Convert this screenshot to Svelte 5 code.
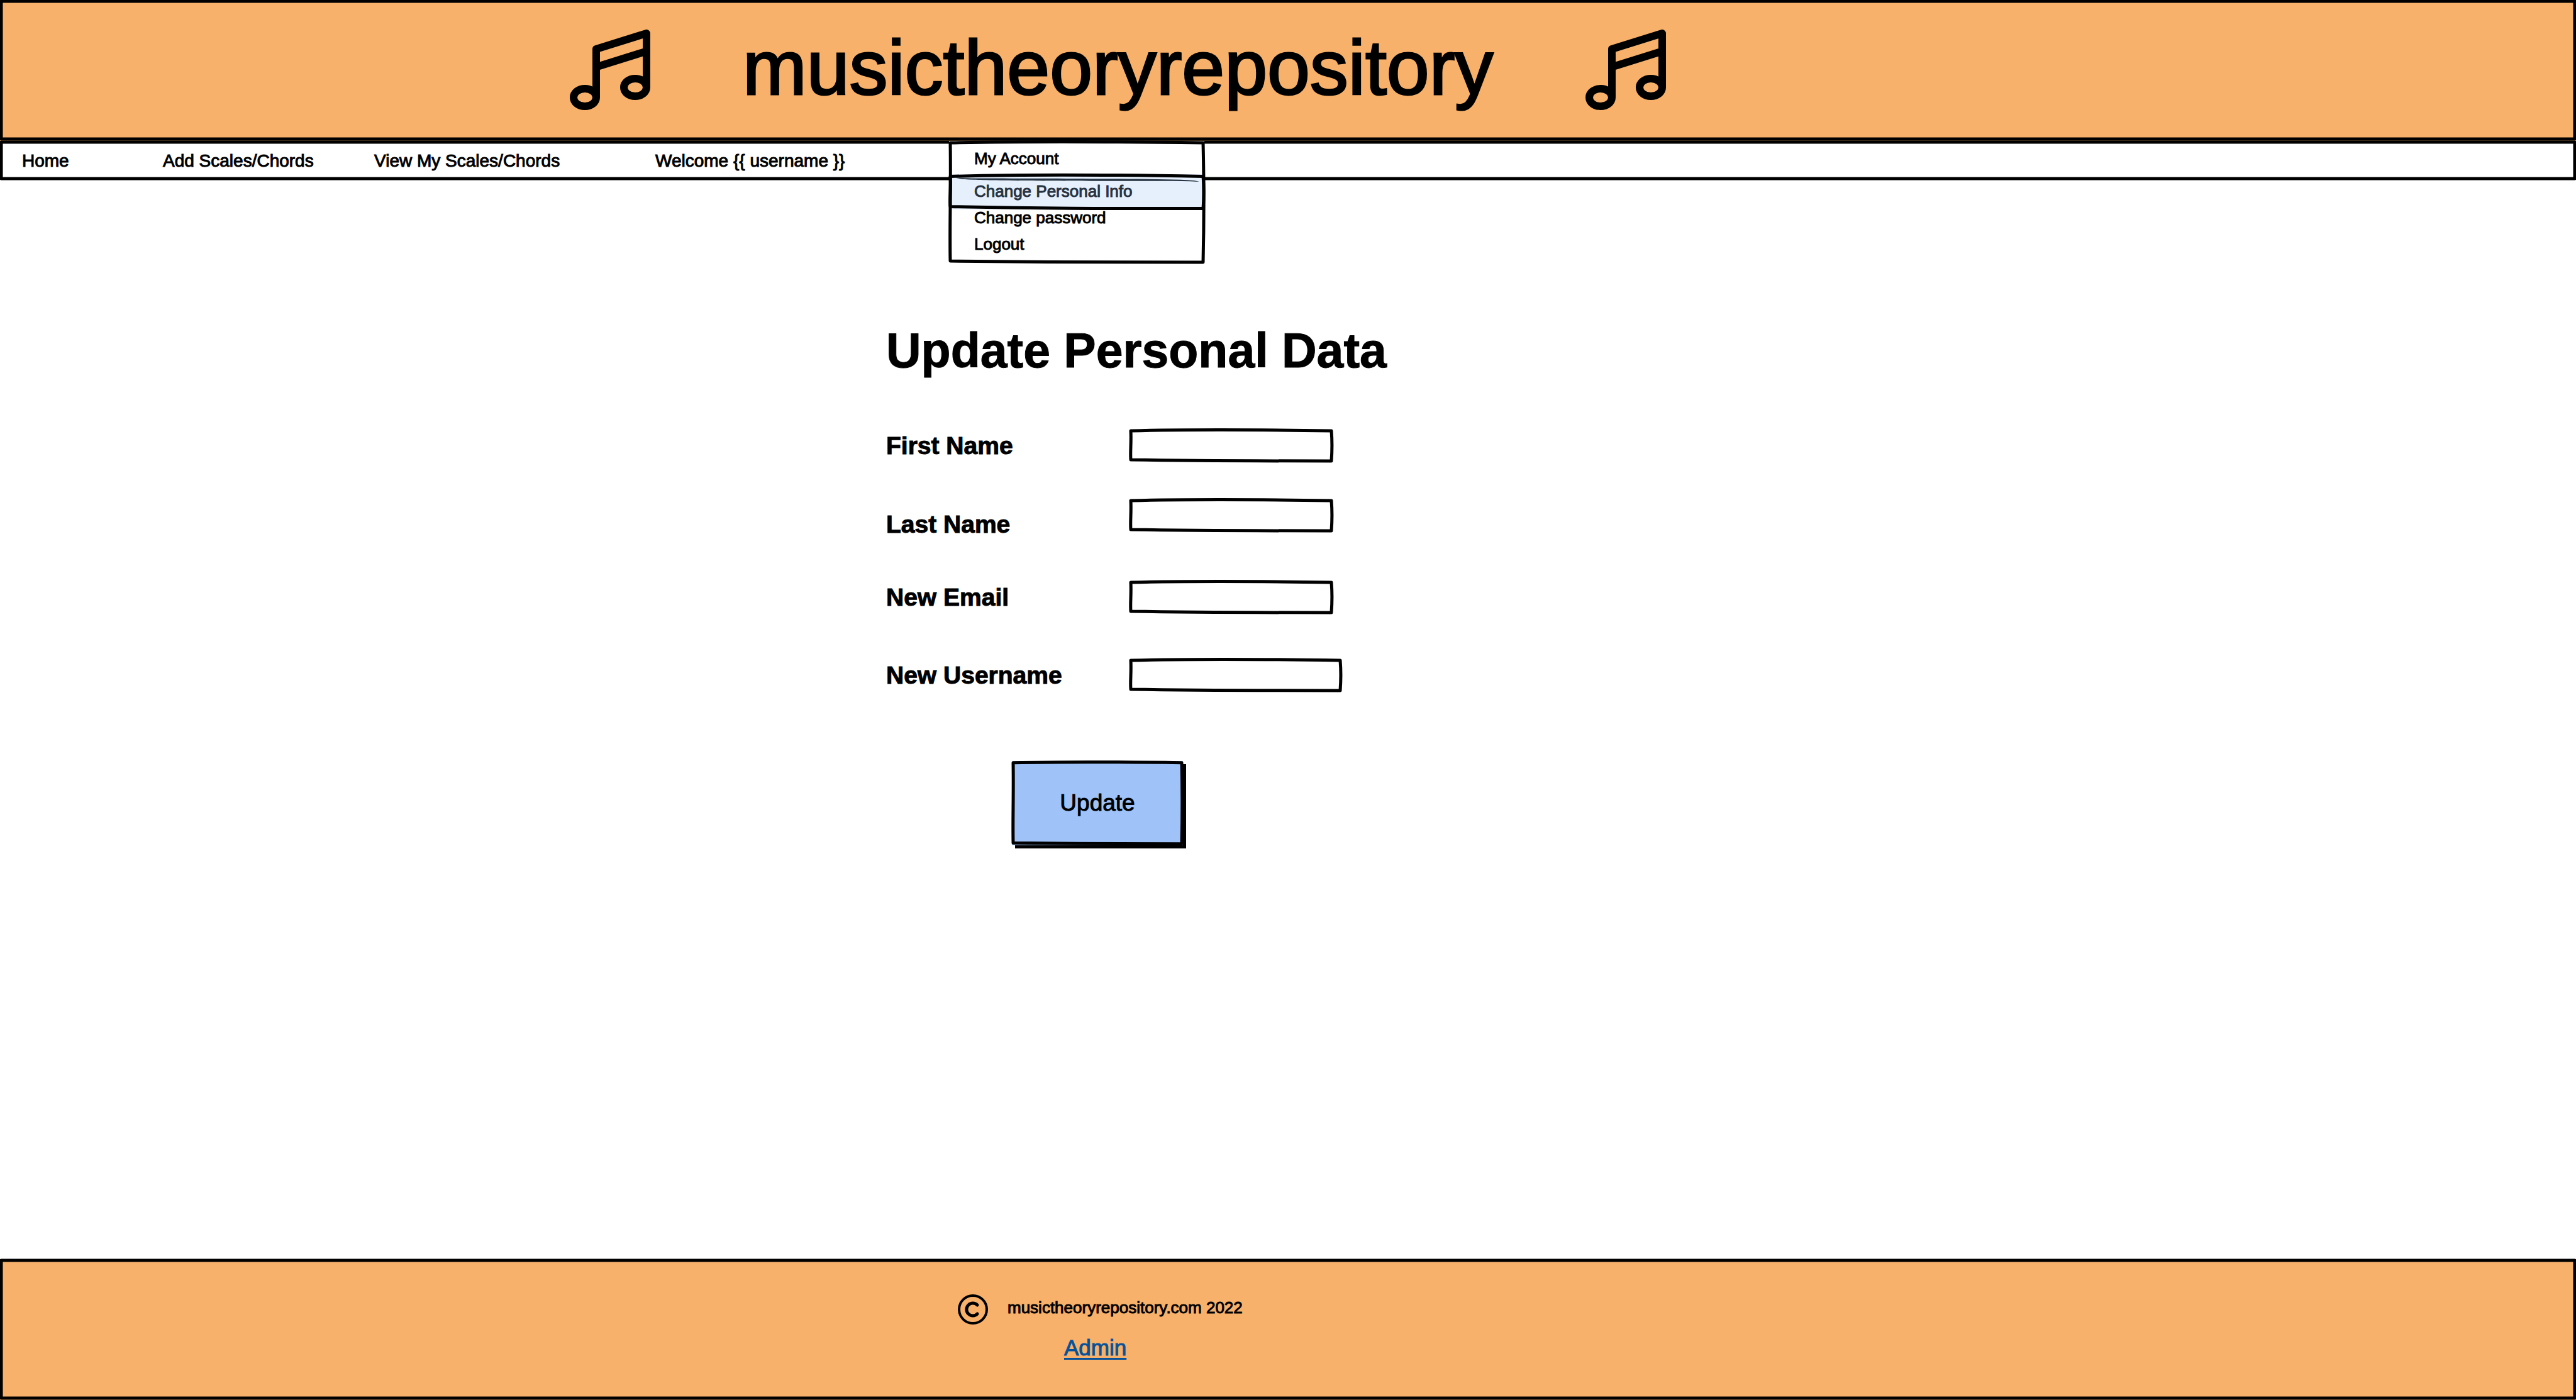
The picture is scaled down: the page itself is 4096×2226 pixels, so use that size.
<script>
  const links = ['Home', 'Add Scales/Chords', 'View My Scales/Chords'];
  const fields = [
    { id: 'first-name', label: 'First Name', type: 'text' },
    { id: 'last-name', label: 'Last Name', type: 'text' },
    { id: 'new-email', label: 'New Email', type: 'email' },
    { id: 'new-username', label: 'New Username', type: 'text' }
  ];

  // Hand-drawn rectangle; k is the wobble as a percentage of the box height.
  const sketch = (k) =>
    `M0 ${k} C25 ${-k} 60 ${-k} 100 ${k} C100.4 35 100.4 65 100 ${100 + k} ` +
    `C60 ${100 + k} 35 ${100 + k} 0 ${100 - k} C-0.3 70 0.3 40 0 ${k} Z`;
</script>

{#snippet frame(k)}
  <svg class="frame" viewBox="0 0 100 100" preserveAspectRatio="none" aria-hidden="true">
    <path d={sketch(k)} />
  </svg>
{/snippet}

{#snippet edge()}
  <svg class="frame" viewBox="0 0 100 100" preserveAspectRatio="none" aria-hidden="true">
    <path d="M0 0 H100 V100 H0 Z" />
  </svg>
{/snippet}

{#snippet notes()}
  <svg class="notes" viewBox="0 0 128 128" aria-hidden="true">
    <ellipse cx="24" cy="108" rx="18" ry="14" />
    <ellipse cx="104" cy="92" rx="18" ry="14" />
    <path d="M42 108 V31 L122 6 V92 M42 59.5 L122 34.5" />
  </svg>
{/snippet}

<div class="page">
  <header class="banner">
    {@render edge()}
    {@render notes()}
    <div class="brand">musictheoryrepository</div>
    {@render notes()}
  </header>

  <nav class="nav">
    {@render edge()}
    {#each links as link}
      <a href="#top">{link}</a>
    {/each}
    <span>Welcome {'{{ username }}'}</span>
    <div class="account">
      <div class="menu">
        <button type="button" class="toggle" aria-expanded="true">My Account</button>
        <a class="item selected" href="#info">
          {@render frame(3)}
          <svg class="streak" viewBox="0 0 100 10" preserveAspectRatio="none" aria-hidden="true">
            <path d="M0 0 C2 3 5 3 12 3 C50 3.5 80 4 95 6.500 Q99 7.500 100 10 L96 9 C70 8 20 9 8 6 Q1 5 0 0 Z" />
          </svg>
          Change Personal Info
        </a>
        <div class="rest">
          <a class="item" href="#password">Change password</a>
          <a class="item" href="#logout">Logout</a>
        </div>
        {@render frame(0.5)}
      </div>
    </div>
  </nav>

  <main>
    <h1>Update Personal Data</h1>
    <form onsubmit={(e) => e.preventDefault()}>
      {#each fields as field}
        <div class="row {field.id}">
          <label for={field.id}>{field.label}</label>
          <span class="box">
            <input id={field.id} type={field.type} />
            {@render frame(2)}
          </span>
        </div>
      {/each}
      <button class="submit" type="submit">
        {@render frame(0.5)}
        Update
      </button>
    </form>
  </main>

  <footer class="footer">
    {@render edge()}
    <div class="legal">
      <svg class="copyright" viewBox="0 0 48 48" role="img" aria-label="Copyright">
        <circle cx="24" cy="24" r="22" />
        <path d="M31 17 A10 10 0 1 0 31 31" />
      </svg>
      <span>musictheoryrepository.com 2022</span>
    </div>
    <a class="admin" href="#admin">Admin</a>
  </footer>
</div>

<style>
  :global(body) {
    margin: 0;
    background: #fff;
  }

  .page {
    display: flex;
    flex-direction: column;
    min-height: 100vh;
    color: #000;
    font-family: 'Liberation Sans', Arial, sans-serif;
    font-size: 28px;
    -webkit-text-stroke-width: 1px;
  }

  a {
    color: inherit;
    text-decoration: none;
  }

  button,
  input {
    margin: 0;
    padding: 0;
    border: 0;
    background: none;
    color: inherit;
    font: inherit;
  }

  svg {
    display: block;
    flex: none;
    fill: none;
    stroke: #000;
  }

  .frame {
    position: absolute;
    top: 2px;
    left: 2px;
    width: calc(100% - 4px);
    height: calc(100% - 5px);
    overflow: visible;
    stroke-width: 5px;
    stroke-linejoin: round;
    pointer-events: none;
  }

  .frame path {
    vector-effect: non-scaling-stroke;
  }

  .banner,
  .footer {
    position: relative;
    box-sizing: border-box;
    min-height: 224px;
    background: #f7b16b;
  }

  .banner {
    display: flex;
    align-items: flex-start;
    gap: 147px;
    padding: 47px 0 0 906px;
  }

  .notes {
    width: 128px;
    height: 128px;
    stroke-width: 12px;
    stroke-linejoin: round;
  }

  .brand {
    font-size: 122px;
    line-height: 122px;
    -webkit-text-stroke-width: 3px;
  }

  .nav {
    position: relative;
    box-sizing: border-box;
    display: grid;
    grid-template-columns: 224px 336px 447px 467px 406px;
    align-items: center;
    min-height: 63px;
    padding-left: 35px;
    white-space: nowrap;
  }

  .account {
    position: relative;
    align-self: stretch;
  }

  .menu {
    position: absolute;
    top: 0;
    left: 0;
    box-sizing: border-box;
    display: flex;
    flex-direction: column;
    width: 100%;
    padding: 5px 0 18px;
    background: #fff;
    font-size: 26px;
    line-height: 26px;
  }

  .toggle {
    padding: 10px 40px 12px;
    text-align: left;
  }

  .item {
    padding-left: 40px;
  }

  .selected {
    position: relative;
    padding: 14px 40px 16px;
    background: #e6f0fd;
    color: #283341;
  }

  .streak {
    position: absolute;
    top: 4px;
    left: 8px;
    width: calc(100% - 16px);
    height: 8px;
    fill: #283341;
    stroke: none;
  }

  .rest {
    display: flex;
    flex-direction: column;
    gap: 16px;
  }

  main {
    flex: 1;
    padding: 226px 0 80px 1409px;
  }

  h1 {
    margin: 0 0 81px;
    font-size: 77px;
    line-height: 88px;
  }

  .row {
    display: flex;
    align-items: flex-start;
    margin-bottom: 58px;
  }

  .last-name {
    height: 67px;
    margin-bottom: 63px;
  }

  .last-name label {
    align-self: flex-end;
  }

  .new-email {
    margin-bottom: 71px;
  }

  .new-username {
    margin-bottom: 110px;
  }

  label {
    width: 387px;
    font-size: 39px;
    font-weight: 700;
    line-height: 53px;
  }

  .box {
    position: relative;
    width: 323px;
    height: 53px;
  }

  .new-username .box {
    width: 337px;
  }

  input {
    box-sizing: border-box;
    width: 100%;
    height: 100%;
    padding: 0 16px;
  }

  .submit {
    position: relative;
    display: block;
    width: 272px;
    height: 134px;
    margin-left: 200px;
    background: #9fc3f8;
    box-shadow: 5px 5px 0 #000;
    font-size: 37px;
  }

  .footer {
    padding-top: 56px;
  }

  .legal {
    display: flex;
    align-items: flex-start;
    gap: 31px;
    padding-left: 1523px;
    font-size: 26px;
    line-height: 42px;
  }

  .copyright {
    width: 48px;
    height: 48px;
    stroke-width: 4px;
    stroke-linecap: round;
  }

  .copyright path {
    stroke-width: 5px;
  }

  .admin {
    display: inline-block;
    margin: 17px 0 0 1692px;
    color: #06529a;
    font-size: 35px;
    line-height: 40px;
    text-decoration: underline;
    text-decoration-thickness: 3px;
    text-underline-offset: 4px;
  }
</style>
